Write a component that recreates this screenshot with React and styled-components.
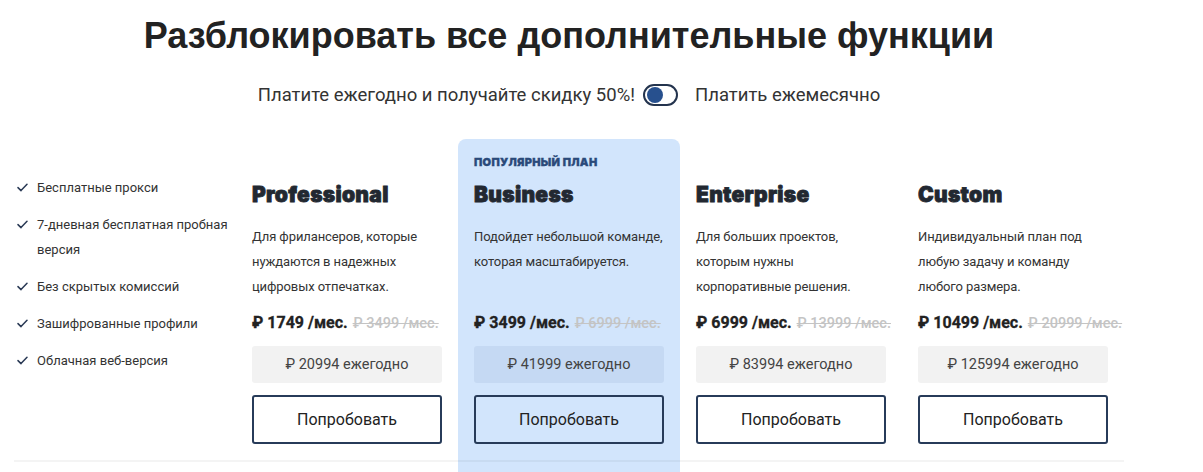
import React from "react";
import styled, { createGlobalStyle } from "styled-components";

const GlobalStyle = createGlobalStyle`
  html, body { margin: 0; padding: 0; background: #fff; }
  body { font-family: Roboto, "Noto Sans", sans-serif; color: #333; overflow: hidden; }
  * { box-sizing: border-box; }
`;

const Page = styled.div`
  width: 1110px;
  margin-left: 14px;
`;

const Title = styled.h1`
  margin: 14px 0 0;
  text-align: center;
  font-family: "Liberation Sans", Arial, sans-serif;
  font-weight: 700;
  font-size: 36px;
  line-height: 44px;
  color: #222;
`;

const ToggleRow = styled.div`
  display: flex;
  justify-content: center;
  align-items: center;
  margin-top: 22px;
  height: 30px;
  font-size: 18.5px;
  color: #333;
`;

const ToggleLabel = styled.span`
  white-space: nowrap;
`;

const Switch = styled.span`
  display: inline-flex;
  align-items: center;
  width: 35px;
  height: 22px;
  margin: 0 17px 0 8px;
  padding: 0 2px;
  border: 2px solid #24344e;
  border-radius: 11px;
`;

const Knob = styled.span`
  width: 16px;
  height: 16px;
  border-radius: 50%;
  background: #27508e;
`;

const PlansGrid = styled.div`
  display: grid;
  grid-template-columns: repeat(5, 222px);
  margin-top: 29px;
`;

const Features = styled.ul`
  list-style: none;
  margin: 0;
  padding: 36px 0 0 3px;
`;

const Feature = styled.li`
  display: flex;
  align-items: flex-start;
  gap: 9px;
  font-size: 13px;
  line-height: 25px;
  color: #333;
  & + & { margin-top: 12px; }
  svg { flex: none; margin-top: 8px; }
`;

const Plan = styled.div`
  padding: 16px 16px 16px;
  background: ${(p) => (p.$popular ? "#d2e5fc" : "transparent")};
  border-radius: 8px 8px 0 0;
`;

const Badge = styled.div`
  height: 14px;
  font-family: Inter, Roboto, sans-serif;
  font-size: 11px;
  line-height: 14px;
  font-weight: 900;
  letter-spacing: 0.3px;
  -webkit-text-stroke: 0.3px #2b4a7a;
  color: #2b4a7a;
  text-transform: uppercase;
  visibility: ${(p) => (p.$show ? "visible" : "hidden")};
`;

const PlanName = styled.h2`
  margin: 13px 0 0;
  font-family: Inter, Roboto, sans-serif;
  font-size: 21px;
  line-height: 26px;
  font-weight: 900;
  letter-spacing: 0.3px;
  -webkit-text-stroke: 0.8px #222831;
  color: #222831;
`;

const Description = styled.p`
  margin: 16px 0 0;
  min-height: 75px;
  font-size: 13px;
  line-height: 25px;
  letter-spacing: -0.1px;
  color: #333;
`;

const PriceRow = styled.div`
  display: flex;
  align-items: baseline;
  gap: 5px;
  margin-top: 14px;
  height: 20px;
  line-height: 20px;
  white-space: nowrap;
`;

const Price = styled.span`
  font-size: 16px;
  font-weight: 700;
  -webkit-text-stroke: 0.3px #222;
  color: #222;
`;

const OldPrice = styled.span`
  font-size: 14.5px;
  font-weight: 500;
  color: #c4c4c4;
  text-decoration: line-through;
`;

const Annual = styled.div`
  display: flex;
  align-items: center;
  justify-content: center;
  height: 37px;
  margin-top: 13px;
  border-radius: 3px;
  background: ${(p) => (p.$popular ? "#c5d9f3" : "#f2f2f2")};
  font-size: 14.5px;
  color: #444;
`;

const TryButton = styled.button`
  display: block;
  width: 100%;
  height: 49px;
  margin-top: 12px;
  border: 2px solid #273b59;
  border-radius: 3px;
  background: transparent;
  font-family: Roboto, "Noto Sans", sans-serif;
  font-size: 16px;
  color: #222;
  cursor: pointer;
`;

const TableRow = styled.div`
  display: grid;
  grid-template-columns: repeat(5, 222px);
`;

const TableCell = styled.div`
  height: 40px;
  border-top: 2px solid rgba(0, 0, 0, 0.045);
  background: ${(p) => (p.$popular ? "#d2e5fc" : "transparent")};
`;

const Check = () => (
  <svg width="11" height="9" viewBox="0 0 11 9" fill="none">
    <path d="M1 4.6L4 7.6L10 1.2" stroke="#2a3a55" strokeWidth="1.5" strokeLinecap="round" strokeLinejoin="round" />
  </svg>
);

const features = [
  "Бесплатные прокси",
  "7-дневная бесплатная пробная версия",
  "Без скрытых комиссий",
  "Зашифрованные профили",
  "Облачная веб-версия",
];

const plans = [
  {
    name: "Professional",
    desc: "Для фрилансеров, которые нуждаются в надежных цифровых отпечатках.",
    price: "₽ 1749 /мес.",
    old: "₽ 3499 /мес.",
    annual: "₽ 20994 ежегодно",
  },
  {
    name: "Business",
    desc: "Подойдет небольшой команде, которая масштабируется.",
    price: "₽ 3499 /мес.",
    old: "₽ 6999 /мес.",
    annual: "₽ 41999 ежегодно",
    popular: true,
  },
  {
    name: "Enterprise",
    desc: "Для больших проектов, которым нужны корпоративные решения.",
    price: "₽ 6999 /мес.",
    old: "₽ 13999 /мес.",
    annual: "₽ 83994 ежегодно",
  },
  {
    name: "Custom",
    desc: "Индивидуальный план под любую задачу и команду любого размера.",
    price: "₽ 10499 /мес.",
    old: "₽ 20999 /мес.",
    annual: "₽ 125994 ежегодно",
  },
];

export default function App() {
  return (
    <>
      <GlobalStyle />
      <Page>
        <Title>Разблокировать все дополнительные функции</Title>
        <ToggleRow>
          <ToggleLabel>Платите ежегодно и получайте скидку 50%!</ToggleLabel>
          <Switch>
            <Knob />
          </Switch>
          <ToggleLabel>Платить ежемесячно</ToggleLabel>
        </ToggleRow>
        <PlansGrid>
          <Features>
            {features.map((f) => (
              <Feature key={f}>
                <Check />
                <span>{f}</span>
              </Feature>
            ))}
          </Features>
          {plans.map((p) => (
            <Plan key={p.name} $popular={p.popular}>
              <Badge $show={p.popular}>Популярный план</Badge>
              <PlanName>{p.name}</PlanName>
              <Description>{p.desc}</Description>
              <PriceRow>
                <Price>{p.price}</Price>
                <OldPrice>{p.old}</OldPrice>
              </PriceRow>
              <Annual $popular={p.popular}>{p.annual}</Annual>
              <TryButton>Попробовать</TryButton>
            </Plan>
          ))}
        </PlansGrid>
        <TableRow>
          {[0, 1, 2, 3, 4].map((i) => (
            <TableCell key={i} $popular={i === 2} />
          ))}
        </TableRow>
      </Page>
    </>
  );
}
